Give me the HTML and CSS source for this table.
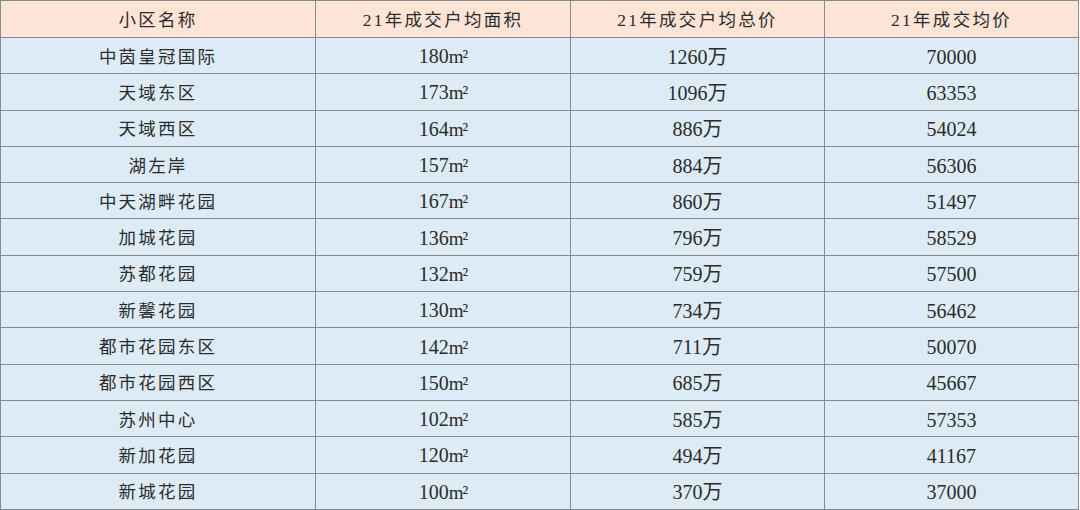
FILE: index.html
```html
<!DOCTYPE html>
<html lang="zh-CN">
<head>
<meta charset="utf-8">
<title>21年成交数据</title>
<link rel="stylesheet" href="styles.css">
</head>
<body>
<table class="deal-table">
  <colgroup>
    <col class="c1"><col class="c2"><col class="c3"><col class="c4">
  </colgroup>
  <thead>
    <tr><th>小区名称</th><th>21年成交户均面积</th><th>21年成交户均总价</th><th>21年成交均价</th></tr>
  </thead>
  <tbody>
    <tr><td class="name">中茵皇冠国际</td><td>180<span class="unit">m²</span></td><td>1260万</td><td>70000</td></tr>
    <tr><td class="name">天域东区</td><td>173<span class="unit">m²</span></td><td>1096万</td><td>63353</td></tr>
    <tr><td class="name">天域西区</td><td>164<span class="unit">m²</span></td><td>886万</td><td>54024</td></tr>
    <tr><td class="name">湖左岸</td><td>157<span class="unit">m²</span></td><td>884万</td><td>56306</td></tr>
    <tr><td class="name">中天湖畔花园</td><td>167<span class="unit">m²</span></td><td>860万</td><td>51497</td></tr>
    <tr><td class="name">加城花园</td><td>136<span class="unit">m²</span></td><td>796万</td><td>58529</td></tr>
    <tr><td class="name">苏都花园</td><td>132<span class="unit">m²</span></td><td>759万</td><td>57500</td></tr>
    <tr><td class="name">新馨花园</td><td>130<span class="unit">m²</span></td><td>734万</td><td>56462</td></tr>
    <tr><td class="name">都市花园东区</td><td>142<span class="unit">m²</span></td><td>711万</td><td>50070</td></tr>
    <tr><td class="name">都市花园西区</td><td>150<span class="unit">m²</span></td><td>685万</td><td>45667</td></tr>
    <tr><td class="name">苏州中心</td><td>102<span class="unit">m²</span></td><td>585万</td><td>57353</td></tr>
    <tr><td class="name">新加花园</td><td>120<span class="unit">m²</span></td><td>494万</td><td>41167</td></tr>
    <tr><td class="name">新城花园</td><td>100<span class="unit">m²</span></td><td>370万</td><td>37000</td></tr>
  </tbody>
</table>
</body>
</html>
```
FILE: styles.css
```css
html, body {
  margin: 0;
  padding: 0;
  background: #ffffff;
}
.deal-table {
  border-collapse: collapse;
  table-layout: fixed;
  width: 1078px;
  font-family: "Liberation Serif", "Noto Sans CJK SC", serif;
  font-size: 20px;
  color: #2b2b2b;
}
.c1 { width: 315px; }
.c2 { width: 255px; }
.c3 { width: 254px; }
.c4 { width: 254px; }
.deal-table th,
.deal-table td {
  border: 1px solid #8a8a8a;
  text-align: center;
  vertical-align: middle;
  padding: 0;
  line-height: 20px;
  white-space: nowrap;
}
.deal-table th {
  background: #fce4d6;
  font-weight: normal;
  height: 35px;
  font-size: 17.5px;
  letter-spacing: 2.3px;
  padding-top: 1px;
}
.deal-table td {
  background: #ddebf7;
  height: 33.3px;
  padding-top: 2px;
}
.deal-table td.name {
  font-size: 17.5px;
  letter-spacing: 2.2px;
}
.unit {
  font-size: 19px;
  letter-spacing: -1px;
}
```
